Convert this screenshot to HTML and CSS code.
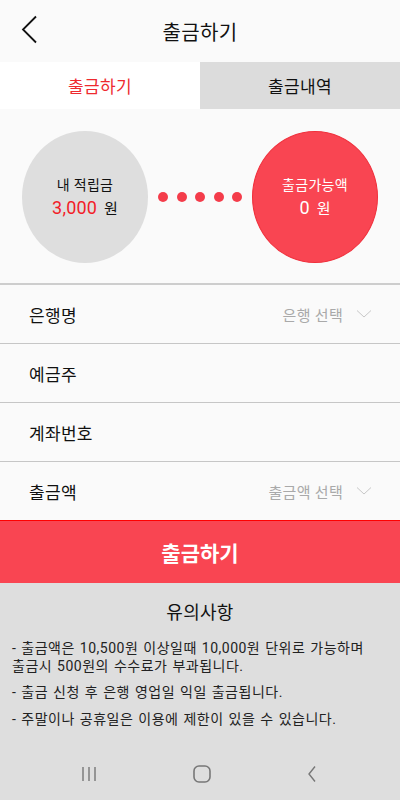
FILE: index.html
```html
<!DOCTYPE html>
<html lang="ko">
<head>
<meta charset="utf-8">
<link rel="stylesheet" href="styles.css">
</head>
<body>
<div class="app">
  <header class="header">
    <svg class="back" width="20" height="30" viewBox="0 0 20 30"><path d="M15 1.5 L2 14.5 L15 27.5" fill="none" stroke="#111" stroke-width="1.8"/></svg>
    <h1 class="title">출금하기</h1>
  </header>
  <nav class="tabs">
    <div class="tab active">출금하기</div>
    <div class="tab">출금내역</div>
  </nav>
  <section class="summary">
    <div class="circle gray">
      <div class="c-label">내 적립금</div>
      <div class="c-value"><span class="num red">3,000</span><span class="won">원</span></div>
    </div>
    <div class="dots"><i></i><i></i><i></i><i></i><i></i></div>
    <div class="circle red-bg">
      <div class="c-label">출금가능액</div>
      <div class="c-value"><span class="num">0</span><span class="won">원</span></div>
    </div>
  </section>
  <section class="form">
    <div class="row"><span class="label">은행명</span><span class="select">은행 선택<svg class="chev" width="16" height="10" viewBox="0 0 16 10"><path d="M1 1.5 L8 8 L15 1.5" fill="none" stroke="#c8c8c8" stroke-width="1"/></svg></span></div>
    <div class="row"><span class="label">예금주</span></div>
    <div class="row"><span class="label">계좌번호</span></div>
    <div class="row"><span class="label">출금액</span><span class="select">출금액 선택<svg class="chev" width="16" height="10" viewBox="0 0 16 10"><path d="M1 1.5 L8 8 L15 1.5" fill="none" stroke="#c8c8c8" stroke-width="1"/></svg></span></div>
  </section>
  <button class="submit">출금하기</button>
  <section class="notice">
    <h2 class="n-title">유의사항</h2>
    <p class="n-text">- 출금액은 10,500원 이상일때 10,000원 단위로 가능하며<br>출금시 500원의 수수료가 부과됩니다.</p>
    <p class="n-text">- 출금 신청 후 은행 영업일 익일 출금됩니다.</p>
    <p class="n-text">- 주말이나 공휴일은 이용에 제한이 있을 수 있습니다.</p>
  </section>
  <footer class="navbar">
    <svg width="16" height="16" viewBox="0 0 16 16"><path d="M2 1v14M8 1v14M14 1v14" stroke="#777" stroke-width="1.4"/></svg>
    <svg width="18" height="18" viewBox="0 0 18 18"><rect x="1" y="1" width="16" height="16" rx="5" fill="none" stroke="#777" stroke-width="1.6"/></svg>
    <svg width="10" height="18" viewBox="0 0 10 18"><path d="M8 1.5 L2 9 L8 16.5" fill="none" stroke="#777" stroke-width="1.4"/></svg>
  </footer>
</div>
</body>
</html>
```
FILE: styles.css
```css
* { box-sizing: border-box; }
html, body { margin: 0; padding: 0; }
body {
  width: 400px;
  height: 800px;
  overflow: hidden;
  font-family: Roboto, "Noto Sans CJK KR", sans-serif;
  color: #111;
  background: #dedede;
}
.app { display: flex; flex-direction: column; height: 800px; }
.header {
  height: 62px;
  background: #fafafa;
  display: flex;
  align-items: center;
  justify-content: center;
  position: relative;
}
.back { position: absolute; left: 21px; top: 15px; }
.title { margin: 0; font-size: 20px; font-weight: 400; color: #111; letter-spacing: 0.3px; }
.tabs { display: flex; height: 47px; }
.tab {
  flex: 1;
  display: flex;
  align-items: center;
  justify-content: center;
  font-size: 17px;
  letter-spacing: 0.3px;
  background: #dcdcdc;
  color: #111;
}
.tab.active { background: #fff; color: #ee2a2f; }
.summary {
  height: 176px;
  background: #fafafa;
  display: flex;
  align-items: center;
  padding: 0 22px;
  justify-content: space-between;
  border-bottom: 2px solid #cdcdcd;
}
.circle {
  width: 126px;
  height: 132px;
  border-radius: 50%;
  display: flex;
  flex-direction: column;
  align-items: center;
  justify-content: center;
  gap: 2px;
  margin-top: 2px;
}
.circle.gray { background: #dedede; color: #111; }
.circle.red-bg { background: #f94552; color: #fff; border: 1px solid #f0303c; }
.c-label { font-size: 14px; line-height: 20px; letter-spacing: 0.3px; }
.c-value { font-size: 15px; line-height: 22px; display: flex; align-items: baseline; gap: 7px; }
.num { font-size: 18px; letter-spacing: 0.2px; }
.red { color: #f21c28; }
.won { font-size: 15px; }
.dots { display: flex; gap: 8.5px; margin-top: 2px; }
.dots i { width: 10px; height: 10px; border-radius: 50%; background: #f43c4a; display: block; }
.form { background: #fafafa; }
.row {
  height: 59px;
  display: flex;
  align-items: center;
  justify-content: space-between;
  padding: 0 28px 0 29px;
  border-bottom: 1.5px solid #c6c6c6;
}
.row:last-child { border-bottom: none; height: 58px; }
.label { font-size: 17px; color: #111; letter-spacing: 0.3px; }
.select { font-size: 15px; color: #a9a9a9; display: flex; align-items: center; gap: 13px; letter-spacing: 0.3px; }
.submit {
  height: 63px;
  border: none;
  border-top: 1.5px solid #f00;
  background: #f94552;
  color: #fff;
  font-family: Roboto, "Noto Sans CJK KR", sans-serif;
  font-size: 21px;
  font-weight: 700;
  padding: 0;
  width: 100%;
}
.notice { background: #dedede; padding: 18px 12px 0; flex: 1; }
.n-title { margin: 0 0 15px; text-align: center; font-size: 18px; font-weight: 400; color: #111; line-height: 24px; letter-spacing: 0.3px; }
.n-text { margin: 0 0 9px; font-size: 14px; line-height: 17.5px; color: #222; letter-spacing: 0.5px; word-spacing: 1px; }
.navbar {
  height: 52px;
  background: #dedede;
  display: flex;
  align-items: center;
  justify-content: space-between;
  padding: 0 83px 0 81px;
}
```
